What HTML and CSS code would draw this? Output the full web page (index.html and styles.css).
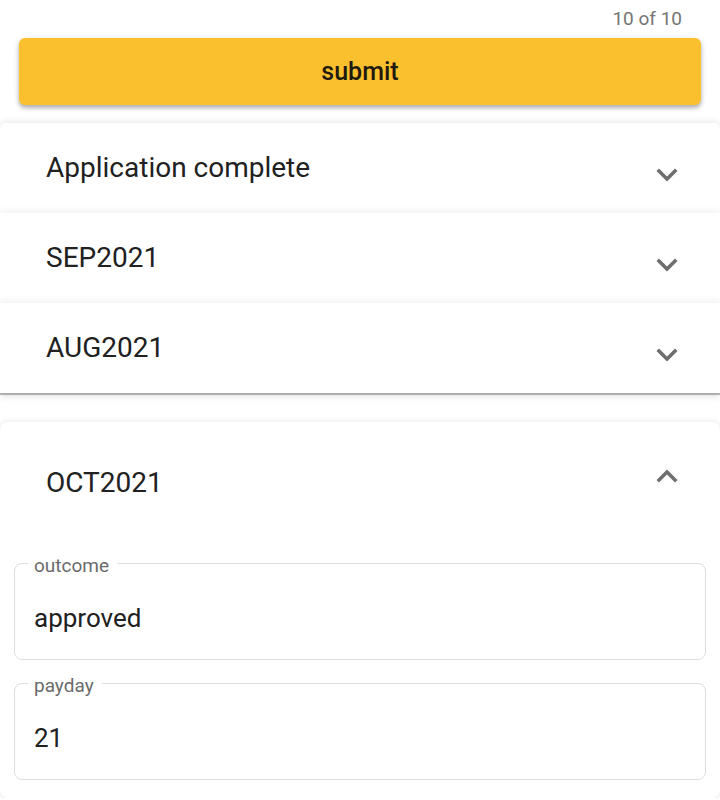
FILE: index.html
```html
<!DOCTYPE html>
<html lang="en">
<head>
<meta charset="utf-8">
<title>Application</title>
<link rel="stylesheet" href="styles.css">
</head>
<body>
<div class="page">
  <div class="counter">10 of 10</div>
  <button class="submit" type="button">submit</button>

  <div class="group">
    <div class="panel">
      <span class="panel-title">Application complete</span>
      <svg class="chev" viewBox="0 -3.7 24 24" width="42" height="42"><path d="M16.59 8.59L12 13.17 7.41 8.59 6 10l6 6 6-6z"/></svg>
    </div>
    <div class="panel">
      <span class="panel-title">SEP2021</span>
      <svg class="chev" viewBox="0 -3.7 24 24" width="42" height="42"><path d="M16.59 8.59L12 13.17 7.41 8.59 6 10l6 6 6-6z"/></svg>
    </div>
    <div class="panel">
      <span class="panel-title">AUG2021</span>
      <svg class="chev" viewBox="0 -3.7 24 24" width="42" height="42"><path d="M16.59 8.59L12 13.17 7.41 8.59 6 10l6 6 6-6z"/></svg>
    </div>
  </div>

  <div class="expanded">
    <div class="exp-head">
      <span class="panel-title">OCT2021</span>
      <svg class="chev up" viewBox="0 -3.7 24 24" width="42" height="42"><path d="M16.59 8.59L12 13.17 7.41 8.59 6 10l6 6 6-6z"/></svg>
    </div>
    <div class="exp-body">
      <fieldset class="field">
        <legend class="field-label">outcome</legend>
        <div class="field-value">approved</div>
      </fieldset>
      <fieldset class="field">
        <legend class="field-label">payday</legend>
        <div class="field-value">21</div>
      </fieldset>
    </div>
  </div>
</div>
</body>
</html>
```

FILE: styles.css
```css
* { box-sizing: border-box; }

html, body {
  margin: 0;
  padding: 0;
  background: #ffffff;
}

body {
  font-family: Roboto, "Noto Sans", "Liberation Sans", sans-serif;
  color: #212121;
}

.page {
  padding-top: 8px;
  display: flex;
  flex-direction: column;
}

.counter {
  text-align: right;
  padding-right: 38px;
  font-size: 19px;
  line-height: 22px;
  color: #757575;
}

.submit {
  margin: 8px 19px 0 19px;
  height: 67px;
  border: none;
  border-radius: 6px;
  background: #fbc02d;
  color: #1f1a10;
  font-family: Roboto, "Noto Sans", sans-serif;
  font-size: 25px;
  font-weight: 500;
  box-shadow: 0 3px 4px rgba(0, 0, 0, 0.28), 0 1px 8px rgba(0, 0, 0, 0.08);
  padding: 0;
}

.group {
  margin-top: 18px;
  display: flex;
  flex-direction: column;
  border-radius: 6px 6px 0 0;
  box-shadow: 0 2px 1px rgba(0, 0, 0, 0.28), 0 3px 8px rgba(0, 0, 0, 0.1);
}

.panel {
  position: relative;
  height: 90px;
  background: #fff;
  display: flex;
  align-items: center;
  justify-content: space-between;
  padding: 0 32px 0 46px;
  box-shadow: 0 -3px 6px rgba(0, 0, 0, 0.05);
}

.panel:first-child {
  border-radius: 6px 6px 0 0;
}

.panel-title {
  font-size: 28px;
  line-height: 34px;
  color: #212121;
}

.chev {
  display: block;
  fill: #6e6e6e;
}

.chev.up {
  transform: rotate(180deg);
}

.expanded {
  margin-top: 29px;
  background: #fff;
  border-radius: 8px;
  box-shadow: 0 -2px 6px rgba(0, 0, 0, 0.06), 0 1px 3px rgba(0, 0, 0, 0.08);
}

.exp-head {
  height: 122px;
  display: flex;
  align-items: center;
  justify-content: space-between;
  padding: 0 32px 0 46px;
}

.exp-body {
  padding: 6px 14px 18px 14px;
  display: flex;
  flex-direction: column;
  gap: 10px;
}

.field {
  margin: 0;
  border: 1px solid #dedede;
  border-radius: 8px;
  padding: 0 19px 25px 19px;
  min-width: 0;
}

.field-label {
  font-size: 19px;
  line-height: 20px;
  color: #6b6b6b;
  padding: 6px 8px 0 6px;
  margin-left: -6px;
}

.field-value {
  margin-top: 26px;
  font-size: 26px;
  line-height: 32px;
  color: #212121;
}
```
